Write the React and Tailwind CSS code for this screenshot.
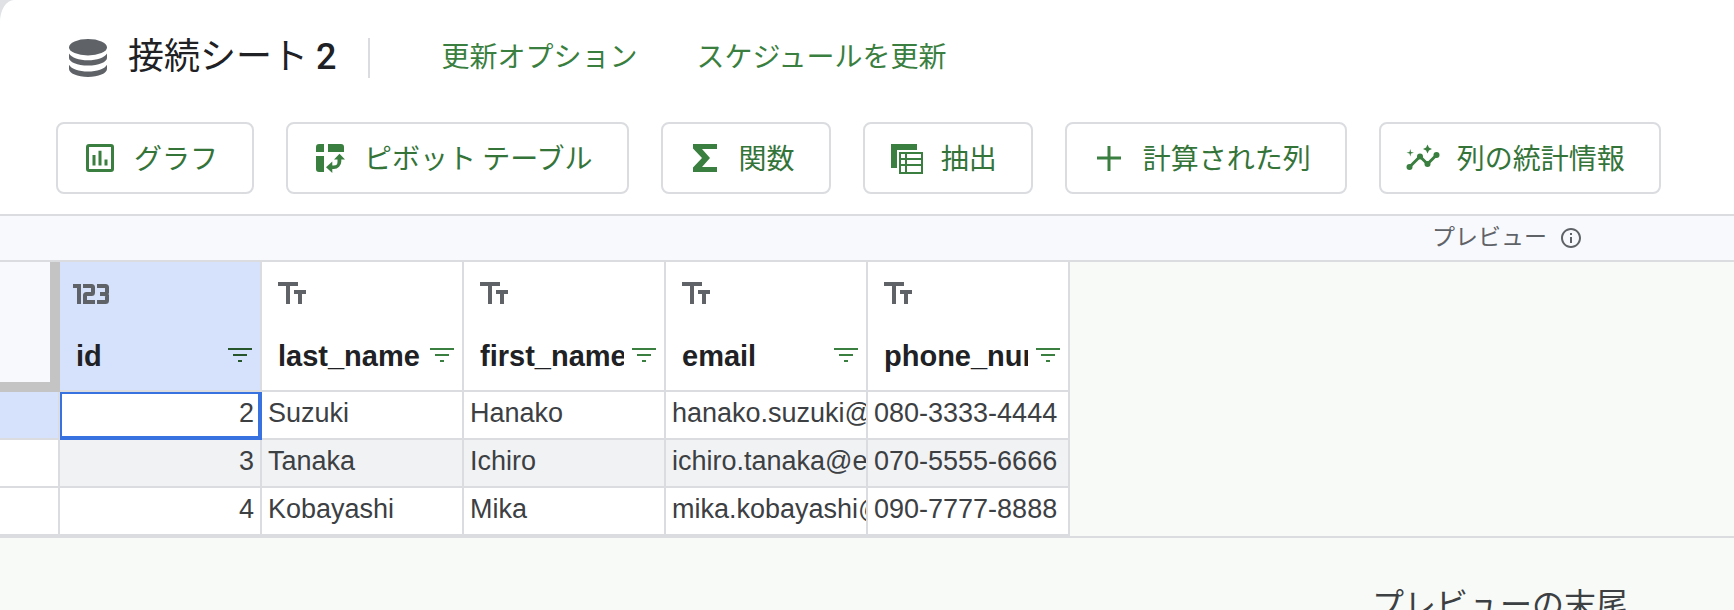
import React from "react";

const columns = [
  { name: "id", type: "number" },
  { name: "last_name", type: "text" },
  { name: "first_name", type: "text" },
  { name: "email", type: "text" },
  { name: "phone_number", type: "text" },
];

const rows = [
  ["2", "Suzuki", "Hanako", "hanako.suzuki@example.com", "080-3333-4444"],
  ["3", "Tanaka", "Ichiro", "ichiro.tanaka@example.com", "070-5555-6666"],
  ["4", "Kobayashi", "Mika", "mika.kobayashi@example.com", "090-7777-8888"],
];

function DatabaseIcon() {
  return (
    <svg className="h-[38px] w-[38px] shrink-0 text-[#5f6368]" viewBox="0 0 38 38" fill="currentColor" aria-hidden="true">
      <ellipse cx="19" cy="8.2" rx="19" ry="8.2" />
      <path d="M0 14.500c2.500 4.300 10 6.800 19 6.800s16.500-2.500 19-6.800v4.500c0 4-8.500 7.600-19 7.600S0 23 0 19z" />
      <path d="M0 25.800c2.500 4.300 10 6.800 19 6.800s16.500-2.500 19-6.800v4.300c0 4.300-8.500 7.900-19 7.900S0 34.400 0 30.100z" />
    </svg>
  );
}

function ChartIcon() {
  return (
    <svg className="h-9 w-9" viewBox="0 0 36 36" fill="currentColor" aria-hidden="true">
      <rect x="5.500" y="5.500" width="25" height="25" rx="1.500" fill="none" stroke="currentColor" strokeWidth="3" />
      <path d="M10.500 15h3v10.500h-3zM16.500 10.800h3v14.700h-3zM22.500 19.500h3v6h-3z" />
    </svg>
  );
}

function PivotIcon() {
  return (
    <svg className="h-9 w-9" viewBox="0 0 36 36" fill="currentColor" aria-hidden="true">
      <path d="M7 4h5v8H4V7a3 3 0 0 1 3-3zM16 4h13a3 3 0 0 1 3 3v5H16zM4 16h8v16H7a3 3 0 0 1-3-3z" />
      <path d="M27.500 13.800 33 19.600h-3.700v1.900a7.500 7.500 0 0 1-7.500 7.500h-1.500v4l-6.300-5.700 6.300-5.700v4h1.500a3.800 3.800 0 0 0 3.700-3.900v-2.100H22z" />
    </svg>
  );
}

function SigmaIcon() {
  return (
    <svg className="h-9 w-9" viewBox="0 0 36 36" fill="currentColor" aria-hidden="true">
      <path d="M6 4h24v5H15l8 9-8 9h15v5H6v-4.500L15 18 6 8.500z" />
    </svg>
  );
}

function ExtractIcon() {
  return (
    <svg className="h-9 w-9" viewBox="0 0 36 36" fill="currentColor" aria-hidden="true">
      <path d="M2 4h26v6H8v18H2z" />
      <path fillRule="evenodd" d="M10 12h24v22H10zM12 14v4h4v-4zM18 14v4h14v-4zM12 20v4h4v-4zM18 20v4h14v-4zM12 26v6h4v-6zM18 26v6h14v-6z" />
    </svg>
  );
}

function PlusIcon() {
  return (
    <svg className="h-9 w-9" viewBox="0 0 36 36" fill="currentColor" aria-hidden="true">
      <path d="M16.500 6h3v10.500H30v3H19.500V31h-3V19.500H6v-3h10.500z" />
    </svg>
  );
}

function InsightsIcon() {
  return (
    <svg className="h-9 w-9" viewBox="0 0 24 24" fill="currentColor" aria-hidden="true">
      <path
        d="M3 18 10 11l5 5 6-6"
        fill="none"
        stroke="currentColor"
        strokeWidth="2"
      />
      <circle cx="3" cy="18" r="2" />
      <circle cx="10" cy="11" r="2" />
      <circle cx="15" cy="16" r="2" />
      <circle cx="21" cy="10" r="2" />
      <path d="m15 9 .94-2.070L18 6l-2.060-.93L15 3l-.92 2.070L12 6l2.080.93zM3.500 11 4 9l2-.5L4 8l-.5-2L3 8l-2 .5L3 9z" />
    </svg>
  );
}

function InfoIcon() {
  return (
    <svg className="h-6 w-6" viewBox="0 0 24 24" fill="currentColor" aria-hidden="true">
      <path d="M11 7h2v2h-2zm0 4h2v6h-2zm1-9C6.480 2 2 6.480 2 12s4.480 10 10 10 10-4.480 10-10S17.520 2 12 2zm0 18c-4.410 0-8-3.590-8-8s3.590-8 8-8 8 3.590 8 8-3.590 8-8 8z" />
    </svg>
  );
}

function NumberTypeIcon() {
  return (
    <svg className="-ml-[3px] h-[22px] w-9" viewBox="0 0 36 22" fill="none" stroke="currentColor" strokeWidth="4" aria-hidden="true">
      <path d="M0 4h6v18M10 4h8.500q1.500 0 1.500 1.500v5q0 1.500-1.500 1.500h-5q-1.500 0-1.500 1.500V20h10M24 4h8.500q1.500 0 1.500 1.500v5L32.500 12H27M32.500 12l1.500 1.500v5q0 1.500-1.500 1.500H24" />
    </svg>
  );
}

function TextTypeIcon() {
  return (
    <svg className="h-[22px] w-7" viewBox="0 0 28 22" fill="currentColor" aria-hidden="true">
      <path d="M0 0h20v4h-8v18H8V4H0zM16 8h12v4h-4v10h-4V12h-4z" />
    </svg>
  );
}

function FilterIcon() {
  return (
    <svg className="h-[14px] w-6" viewBox="0 0 24 14" fill="currentColor" aria-hidden="true">
      <path d="M0 0h24v2H0zM5 6h14v2H5zM10 12h4v2h-4z" />
    </svg>
  );
}

const actions = [
  { label: "グラフ", Icon: ChartIcon },
  { label: "ピボット テーブル", Icon: PivotIcon },
  { label: "関数", Icon: SigmaIcon },
  { label: "抽出", Icon: ExtractIcon },
  { label: "計算された列", Icon: PlusIcon },
  { label: "列の統計情報", Icon: InsightsIcon },
];

function Header() {
  return (
    <header className="border-b-2 border-[#dadce0] bg-white pt-[26px] pb-5 [border-top-left-radius:14px_22px]">
      <div className="flex h-16 items-center pl-[69px]">
        <DatabaseIcon />
        <h1 className="ml-[21px] pb-1.5 text-4xl leading-[56px] whitespace-nowrap text-[#202124]">
          接続シート <span className="font-['Roboto',sans-serif] font-medium">2</span>
        </h1>
        <div className="ml-[31px] h-10 w-0.5 bg-[#dadce0]" />
        <nav className="ml-[72px] flex gap-[59px] pb-1.5 text-[28px] leading-[40px] whitespace-nowrap text-[#3a7f40]">
          <a href="#refresh-options">更新オプション</a>
          <a href="#schedule-refresh">スケジュールを更新</a>
        </nav>
      </div>
      <div className="mt-8 flex gap-8 pl-14">
        {actions.map(({ label, Icon }) => (
          <button
            key={label}
            type="button"
            className="flex h-[72px] shrink-0 items-center gap-4 rounded-lg border-2 border-[#dadce0] bg-white pr-[34px] pl-6 text-[28px] leading-[40px] whitespace-nowrap text-[#347439]"
          >
            <span className="text-[#3a7f40]">
              <Icon />
            </span>
            <span className="pb-0.5">{label}</span>
          </button>
        ))}
      </div>
    </header>
  );
}

function ColumnHeader({ name, type, selected }) {
  return (
    <th
      scope="col"
      className={
        selected
          ? "h-[130px] border-r-2 border-b-2 border-[#dadce0] bg-[#d6e1fb] p-0 text-left align-top text-[#28562c]"
          : "h-[130px] border-r-2 border-b-2 border-[#dadce0] bg-white p-0 text-left align-top text-[#3a7f40]"
      }
    >
      <div className="pt-5 pl-4 text-[#5f6368]">
        {type === "number" ? <NumberTypeIcon /> : <TextTypeIcon />}
      </div>
      <div className="mt-8 flex items-center justify-between pr-2 pl-4">
        <span className="w-36 overflow-hidden pt-0.5 text-[29px] leading-[36px] font-bold whitespace-nowrap text-[#202124]">
          {name}
        </span>
        <button type="button" aria-label={`${name} のフィルタ`}>
          <FilterIcon />
        </button>
      </div>
    </th>
  );
}

function DataTable() {
  return (
    <table className="w-[1070px] table-fixed border-separate border-spacing-0 font-['Liberation_Sans',Arial,sans-serif] text-[27px] text-[#3c4043]">
      <colgroup>
        <col className="w-[60px]" />
        {columns.map((c) => (
          <col key={c.name} className="w-[202px]" />
        ))}
      </colgroup>
      <thead>
        <tr>
          <td className="border-r-10 border-b-10 border-[#c4c4c4] bg-[#f8f9fc] p-0" />
          {columns.map((c, i) => (
            <ColumnHeader key={c.name} {...c} selected={i === 0} />
          ))}
        </tr>
      </thead>
      <tbody>
        {rows.map((row, r) => (
          <tr key={row[0]} className={r % 2 ? "bg-[#f1f2f4]" : "bg-white"}>
            <td
              className={
                r === 0
                  ? "border-r-2 border-b-2 border-[#dadce0] bg-[#d6e1fb] p-0"
                  : "border-r-2 border-b-2 border-[#dadce0] bg-white p-0"
              }
            />
            {row.map((value, c) => (
              <td
                key={columns[c].name}
                className={
                  r === 0 && c === 0
                    ? "h-12 border-t-2 border-r-4 border-b-4 border-l-2 border-[#3871e0] p-0 pr-1 text-right"
                    : c === 0
                      ? "h-12 border-r-2 border-b-2 border-[#dadce0] p-0 pr-1.5 text-right"
                      : "h-12 border-r-2 border-b-2 border-[#dadce0] p-0 pl-1.5"
                }
              >
                <div className="overflow-hidden pb-1 leading-[36px] whitespace-nowrap">{value}</div>
              </td>
            ))}
          </tr>
        ))}
      </tbody>
    </table>
  );
}

export default function App() {
  return (
    <div className="h-screen overflow-hidden bg-[#dfe1e5] font-['Noto_Sans_CJK_JP',sans-serif]">
      <Header />
      <main className="min-h-screen bg-[#f8faf7]">
        <div className="flex h-[46px] items-center justify-end gap-3 border-b-2 border-[#dadce0] bg-[#f8f9fc] pr-[151px] text-[#5f6368]">
          <span className="pb-1.5 text-[23px] leading-[32px]">プレビュー</span>
          <InfoIcon />
        </div>
        <div className="border-b-2 border-[#dadce0]">
          <DataTable />
        </div>
        <p className="pt-10 pr-[106px] text-right text-[32px] leading-[48px] text-[#3c4043]">プレビューの末尾</p>
      </main>
    </div>
  );
}
